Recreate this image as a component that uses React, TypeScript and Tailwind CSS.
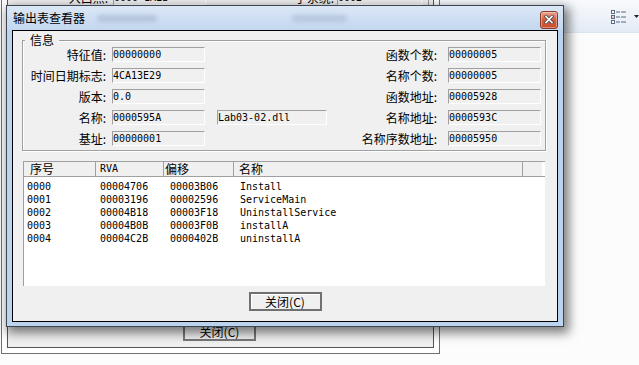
import React from 'react';

const cjk = "font-['Noto_Sans_CJK_SC',sans-serif]";
const mono = "font-['DejaVu_Sans_Mono',monospace]";

type InfoRow = {
  label: string;
  value: string;
  extra?: string;
  rightLabel: string;
  rightValue: string;
};

const infoRows: InfoRow[] = [
  { label: '特征值:', value: '00000000', rightLabel: '函数个数:', rightValue: '00000005' },
  { label: '时间日期标志:', value: '4CA13E29', rightLabel: '名称个数:', rightValue: '00000005' },
  { label: '版本:', value: '0.0', rightLabel: '函数地址:', rightValue: '00005928' },
  { label: '名称:', value: '0000595A', extra: 'Lab03-02.dll', rightLabel: '名称地址:', rightValue: '0000593C' },
  { label: '基址:', value: '00000001', rightLabel: '名称序数地址:', rightValue: '00005950' },
];

const exports = [
  { ord: '0000', rva: '00004706', offset: '00003B06', name: 'Install' },
  { ord: '0001', rva: '00003196', offset: '00002596', name: 'ServiceMain' },
  { ord: '0002', rva: '00004B18', offset: '00003F18', name: 'UninstallService' },
  { ord: '0003', rva: '00004B0B', offset: '00003F0B', name: 'installA' },
  { ord: '0004', rva: '00004C2B', offset: '0000402B', name: 'uninstallA' },
];

const Field = ({ value, width }: { value: string; width: string }) => (
  <div
    className={`${width} h-[15px] border-t border-l border-[#a0a0a0] border-b border-r border-b-white border-r-white bg-[#f0f0f0] ${mono} text-[10px] leading-[13px] text-black whitespace-nowrap overflow-hidden`}
  >
    {value}
  </div>
);

const CloseButton = () => (
  <div className="w-[18px] h-[18px] rounded-[3px] border border-[#8a3b2a] bg-linear-to-b from-[#eaa590] via-[#d25b3e] to-[#c9512f] shadow-[inset_0_0_0_1px_rgba(255,255,255,0.35)] flex items-center justify-center">
    <svg width="10" height="9" viewBox="0 0 10 9">
      <path d="M2 1.5 L8 7.5 M8 1.5 L2 7.5" stroke="#4a4a4a" strokeWidth="3.2" strokeLinecap="square" />
      <path d="M2 1.5 L8 7.5 M8 1.5 L2 7.5" stroke="#ffffff" strokeWidth="1.6" strokeLinecap="square" />
    </svg>
  </div>
);

const BackWindow = () => (
  <div className="absolute left-[1px] top-[-30px] w-[439px] h-[384px] border border-[#707070] bg-white">
    <div className="absolute inset-[5px] border border-[#555] bg-[#f0f0f0]">
      {/* row peeking above the dialog */}
      <div className="absolute top-[13px] left-0 flex items-center h-[15px]">
        <div className={`w-[100px] text-right ${cjk} text-[12px] leading-[15px] text-black`}>入口点:</div>
        <div className="ml-[5px]">
          <Field value="0000 1A2B" width="w-[93px]" />
        </div>
        <div className={`w-[128px] text-right ${cjk} text-[12px] leading-[15px] text-black`}>子系统:</div>
        <div className="ml-[3px]">
          <Field value="0002" width="w-[85px]" />
        </div>
      </div>
      <div className="absolute top-[0px] right-[4px] w-[1px] h-[60px] bg-[#999]" />
      <div
        className={`absolute left-[175px] top-[345px] w-[73px] h-[19px] border-2 border-[#777] bg-[#f0f0f0] flex items-center justify-center ${cjk} text-[12px] leading-[15px] text-black`}
      >
        关闭(C)
      </div>
    </div>
  </div>
);

const Toolbar = () => (
  <div className="absolute left-[440px] top-0 w-[199px] h-[33px] bg-linear-to-b from-[#f8fafd] to-[#e3ebf5] border-b border-[#dae3ee]">
    <svg className="absolute left-[171px] top-[10px]" width="16" height="14" viewBox="0 0 16 14">
      {[0, 5, 10].map((y, i) => (
        <g key={y}>
          <rect x="0.5" y={y + 0.5} width="3" height="3" fill="#fff" stroke="#5a6b80" strokeWidth="1" />
          {i === 1 && <rect x="1.5" y={y + 1.5} width="1" height="1" fill="#d23a1a" />}
          <rect x="5" y={y + 1.5} width="4" height="1" fill="#5a6b80" />
          <rect x="10" y={y + 1.5} width="5" height="1" fill="#5a6b80" />
        </g>
      ))}
    </svg>
    <svg className="absolute left-[194px] top-[15px]" width="6" height="4" viewBox="0 0 6 4">
      <path d="M0 0 L5 0 L2.5 3 Z" fill="#222" />
    </svg>
  </div>
);

export default function App() {
  return (
    <div className={`relative w-[639px] h-[365px] overflow-hidden bg-[#fcfcfc] ${cjk}`}>
      <Toolbar />
      <BackWindow />

      {/* Export table viewer dialog */}
      <div className="absolute left-[6px] top-[5px] w-[558px] h-[322px] border border-[#3c4552] bg-[#bcd3ed] shadow-[3px_4px_10px_2px_rgba(0,0,0,0.5)] flex flex-col">
        <div className="h-[24px] flex items-center justify-between pl-[6px] pr-[5px] bg-linear-to-b from-[#dbe7f5] to-[#c3d7ef] relative">
          <span className="text-[12px] leading-[16px] text-black">输出表查看器</span>
          <div className="absolute left-[90px] top-[9px] w-[60px] h-[7px] rounded-full bg-[#a9bad0] blur-[2px] opacity-70" />
          <div className="absolute left-[285px] top-[9px] w-[55px] h-[7px] rounded-full bg-[#a9bad0] blur-[2px] opacity-60" />
          <div className="mt-[3px]">
            <CloseButton />
          </div>
        </div>

        <div className="mx-[5px] mb-[4px] flex-1 border border-black bg-[#f0f0f0] flex flex-col">
          {/* 信息 group */}
          <div className="relative mt-[9px] ml-[9px] w-[524px] h-[111px] border border-[#a0a0a0] shadow-[inset_1px_1px_0_#fff,1px_1px_0_#fff]">
            <div className="absolute left-[2px] top-[-9px] px-[5px] bg-[#f0f0f0] text-[12px] leading-[16px] text-black">信息</div>
            <div className="pt-[6px] flex flex-col gap-[6px]">
              {infoRows.map((row) => (
                <div key={row.label} className="h-[15px] flex items-center">
                  <div className="w-[83px] text-right text-[12px] leading-[15px] text-black whitespace-nowrap">{row.label}</div>
                  <div className="ml-[6px]">
                    <Field value={row.value} width="w-[93px]" />
                  </div>
                  {row.extra ? (
                    <div className="ml-[12px]">
                      <Field value={row.extra} width="w-[110px]" />
                    </div>
                  ) : (
                    <div className="w-[122px]" />
                  )}
                  <div className="w-[110px] text-right text-[12px] leading-[15px] text-black whitespace-nowrap">{row.rightLabel}</div>
                  <div className="ml-[11px]">
                    <Field value={row.rightValue} width="w-[93px]" />
                  </div>
                </div>
              ))}
            </div>
          </div>

          {/* export list */}
          <div className="mt-[10px] ml-[10px] w-[522px] h-[125px] border-l border-t border-[#a0a0a0] bg-white">
            <div className="h-[15px] flex border-b border-[#a0a0a0] text-[12px] leading-[14px] text-black">
              <div className="w-[72px] pl-[6px] border-r border-[#a0a0a0] bg-[#f0f0f0]">序号</div>
              <div className={`w-[68px] pl-[4px] border-r border-[#a0a0a0] bg-[#f0f0f0] ${mono} text-[10px]`}>RVA</div>
              <div className="w-[70px] pl-[1px] border-r border-[#a0a0a0] bg-[#f0f0f0]">偏移</div>
              <div className="w-[289px] pl-[5px] border-r border-[#a0a0a0] bg-[#f0f0f0]">名称</div>
              <div className="w-[20px] border-r border-white bg-[#f0f0f0]" />
            </div>
            <div className={`pt-[3px] ${mono} text-[10px] leading-[13px] text-black`}>
              {exports.map((e) => (
                <div key={e.ord} className="flex pl-[3px] h-[13px]">
                  <div className="w-[73px]">{e.ord}</div>
                  <div className="w-[70px]">{e.rva}</div>
                  <div className="w-[70px]">{e.offset}</div>
                  <div>{e.name}</div>
                </div>
              ))}
            </div>
          </div>

          <div className="mt-[6px] flex justify-center">
            <button className="w-[73px] h-[19px] border-2 border-[#707070] bg-[#f0f0f0] shadow-[inset_1px_1px_0_#fff] flex items-center justify-center text-[12px] leading-[15px] text-black">
              关闭(C)
            </button>
          </div>
        </div>
      </div>
    </div>
  );
}
